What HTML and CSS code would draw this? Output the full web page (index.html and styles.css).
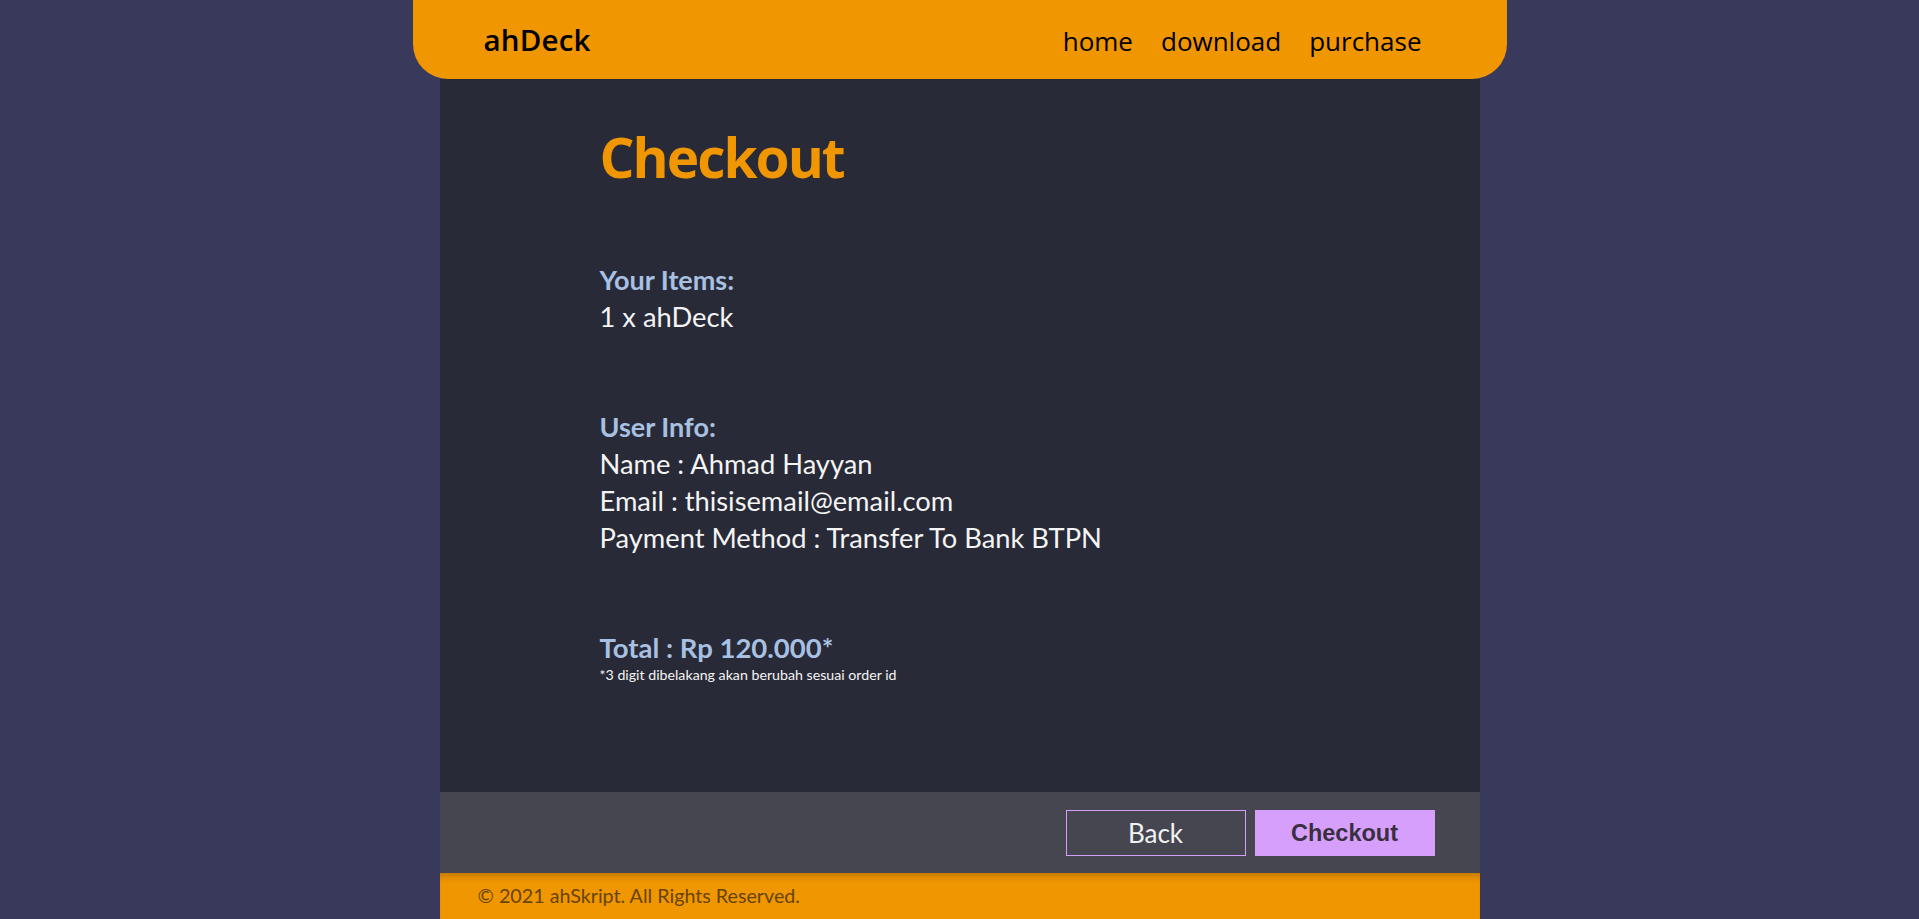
FILE: index.html
```html
<!DOCTYPE html>
<html lang="id">
<head>
<meta charset="utf-8">
<title>ahDeck - Checkout</title>
<link rel="stylesheet" href="styles.css">
</head>
<body>
  <header class="topbar">
    <div class="logo">ahDeck</div>
    <nav class="nav">
      <a class="nav-link" href="#">home</a>
      <a class="nav-link" href="#">download</a>
      <a class="nav-link" href="#">purchase</a>
    </nav>
  </header>
  <div class="page">
    <main class="content">
      <h1 class="title">Checkout</h1>
      <section class="group">
        <div class="label">Your Items:</div>
        <div class="line">1 x ahDeck</div>
      </section>
      <section class="group">
        <div class="label">User Info:</div>
        <div class="line">Name : Ahmad Hayyan</div>
        <div class="line">Email : thisisemail@email.com</div>
        <div class="line">Payment Method : Transfer To Bank BTPN</div>
      </section>
      <section class="group">
        <div class="total">Total : Rp 120.000*</div>
        <div class="note">*3 digit dibelakang akan berubah sesuai order id</div>
      </section>
    </main>
    <div class="actions">
      <button class="btn btn-back">Back</button>
      <button class="btn btn-checkout">Checkout</button>
    </div>
    <footer class="footer">© 2021 ahSkript. All Rights Reserved.</footer>
  </div>
</body>
</html>
```
FILE: styles.css
```css
html, body {
  margin: 0;
  padding: 0;
}
body {
  background: #393a5b;
  min-height: 100vh;
  display: flex;
  flex-direction: column;
  font-family: "Lato", "Open Sans", sans-serif;
}
.topbar {
  width: 1094px;
  height: 79px;
  box-sizing: border-box;
  margin: 0 auto;
  background: #ef9600;
  border-radius: 0 0 35px 35px;
  display: flex;
  justify-content: space-between;
  align-items: baseline;
  padding: 23px 85px 0 71px;
  font-family: "Open Sans", sans-serif;
}
.logo {
  font-size: 29.5px;
  font-weight: 600;
  line-height: 34px;
  color: #000;
  letter-spacing: 0.2px;
}
.nav {
  display: flex;
  gap: 28px;
}
.nav-link {
  font-size: 26px;
  line-height: 34px;
  color: #000;
  text-decoration: none;
}
.page {
  width: 1040px;
  margin: 0 auto;
  flex: 1;
  display: flex;
  flex-direction: column;
}
.content {
  flex: 1;
  background: #282a37;
  padding: 38px 0 0 160px;
  display: flex;
  flex-direction: column;
  gap: 74px;
}
.title {
  margin: 0 0 -9px;
  font-family: "Open Sans", sans-serif;
  font-size: 55px;
  font-weight: 700;
  letter-spacing: -2px;
  line-height: 80px;
  color: #ef9600;
}
.group {
  display: flex;
  flex-direction: column;
}
.label {
  font-size: 27px;
  font-weight: 700;
  line-height: 36.7px;
  color: #a8c0e2;
}
.line {
  font-size: 27.3px;
  line-height: 36.7px;
  color: #f4f4f4;
}
.total {
  font-size: 27.5px;
  font-weight: 700;
  line-height: 36.7px;
  color: #a8c0e2;
}
.note {
  font-size: 14.2px;
  line-height: 16.5px;
  color: #f4f4f4;
}
.actions {
  height: 81px;
  box-sizing: border-box;
  background: #464651;
  display: flex;
  justify-content: flex-end;
  align-items: flex-start;
  gap: 9px;
  padding: 18px 45px 0 0;
}
.btn {
  width: 180px;
  height: 46px;
  box-sizing: border-box;
  margin: 0;
  cursor: pointer;
}
.btn-back {
  background: transparent;
  border: 1px solid #d69ffc;
  color: #f2f2f2;
  font-family: "Lato", sans-serif;
  font-size: 26px;
}
.btn-checkout {
  background: #d69ffc;
  border: none;
  color: #3a2f3e;
  font-family: "Liberation Sans", Arial, sans-serif;
  font-weight: 700;
  font-size: 23.5px;
}
.footer {
  height: 46px;
  box-sizing: border-box;
  background: #ef9600;
  box-shadow: inset 0 8px 8px -6px rgba(0, 0, 0, 0.25);
  padding: 10px 0 0 38px;
  font-size: 19.7px;
  line-height: 26px;
  color: #684400;
}
```
